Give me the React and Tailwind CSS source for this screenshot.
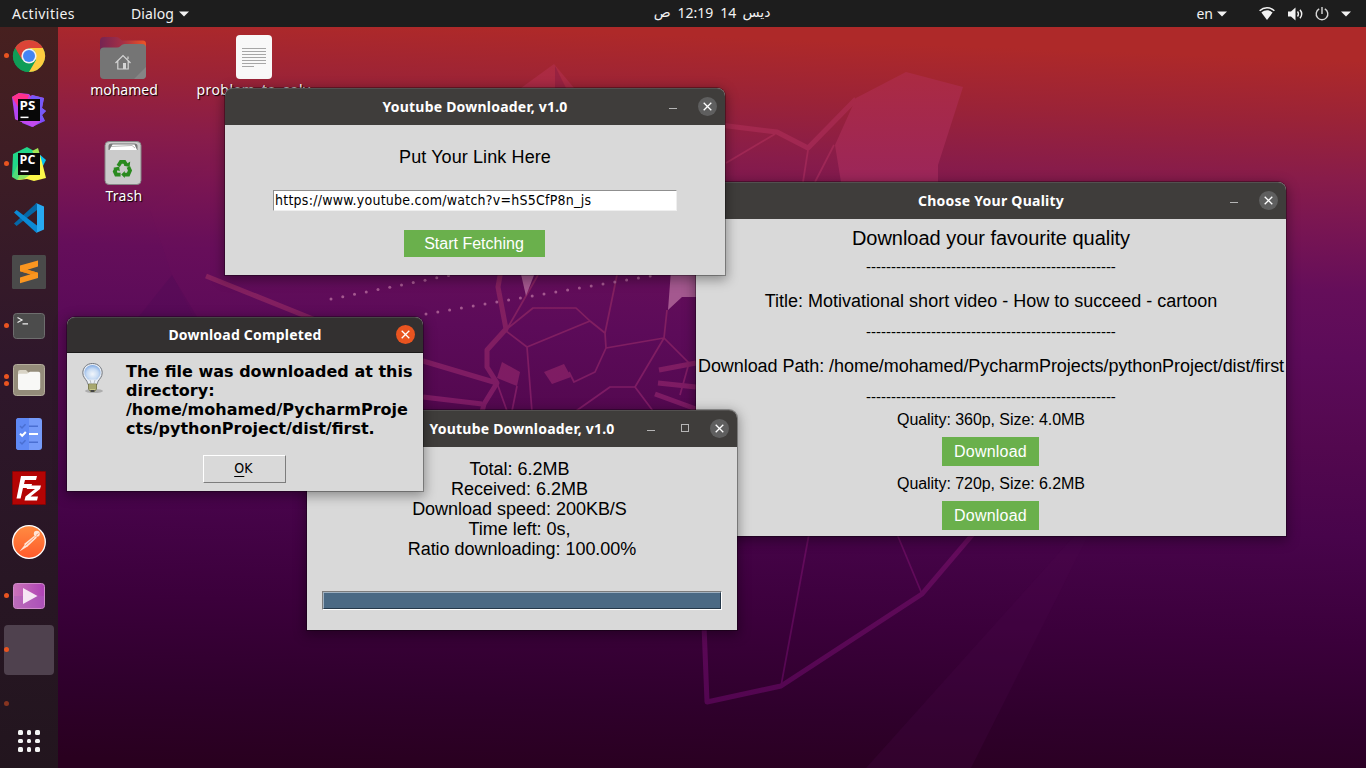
import React from "react";

const noto = "font-['Noto_Sans','Open_Sans',sans-serif]";
const arial = "font-['Liberation_Sans',Arial,sans-serif]";
const dashes = "-".repeat(50);

/* ---------- wallpaper ---------- */

function Wallpaper() {
  const row1 = Array.from({ length: 11 }, (_, i) => [331 + i * 11.75, 299 - i * 2.35]);
  const row2 = Array.from({ length: 20 }, (_, i) => [426 + i * 11.8, 314 - i * 2]);
  return (
    <svg className="absolute inset-0 h-full w-full" viewBox="0 0 1366 768" aria-hidden="true">
      <defs>
        <linearGradient id="sky" gradientUnits="userSpaceOnUse" x1="700" y1="36" x2="672" y2="780">
          <stop offset="0" stopColor="#ae2929" />
          <stop offset="0.08" stopColor="#9b2337" />
          <stop offset="0.16" stopColor="#881c4a" />
          <stop offset="0.22" stopColor="#7a1652" />
          <stop offset="0.31" stopColor="#650e5a" />
          <stop offset="0.4" stopColor="#5c0b59" />
          <stop offset="0.52" stopColor="#53084f" />
          <stop offset="0.64" stopColor="#48044b" />
          <stop offset="0.78" stopColor="#3b003b" />
          <stop offset="0.9" stopColor="#2f002c" />
          <stop offset="1" stopColor="#29001f" />
        </linearGradient>
        <linearGradient id="line" gradientUnits="userSpaceOnUse" x1="0" y1="60" x2="0" y2="710">
          <stop offset="0" stopColor="#ad2b3f" />
          <stop offset="0.18" stopColor="#9c2659" />
          <stop offset="0.35" stopColor="#83205f" />
          <stop offset="0.55" stopColor="#7c1a65" />
          <stop offset="0.75" stopColor="#640b5c" />
          <stop offset="1" stopColor="#520550" />
        </linearGradient>
      </defs>
      <rect width="1366" height="768" fill="url(#sky)" />
      <path d="M172 275 L205 330 H128Z" fill="#400850" opacity=".2" />
      <path d="M150 210 L230 150 V318 H194 L172 275Z" fill="#9a2060" opacity=".04" />
      <path d="M1074 536 H1088 L971 768 H866Z" fill="#4c0a4c" opacity=".22" />
      <g fill="url(#line)">
        <path d="M554 64 L574 88 H521Z" />
        <path d="M856 98 L906 72 L963 87 L938 165 V182 H841 L835 145 L853 105Z" />
        <path d="M502 362 L520 372 L517 386 L497 378Z" />
        <path d="M544 372 L564 364 L571 377 L552 384Z" />
      </g>
      <path d="M555 66 V88 H566Z" fill="#902040" opacity=".7" />
      <g fill="none" stroke="url(#line)" strokeLinejoin="round">
        <g strokeWidth="5">
          <path d="M720 125 L777 132 L808 148 L856 99" />
          <path d="M206 276 L313 319 L423 361 L497 383" />
          <path d="M423 397 L482 404" />
          <path d="M501 270 L498 287 L506 329 L487 350 V367 L497 383 L484 404 L482 412" />
          <path d="M659 370 L696 363 M658 383 L696 387 M655 394 L696 409" />
          <path d="M704 625 L707 702 L781 686 L922 594 L973 534" />
        </g>
        <g strokeWidth="1.7">
          <path d="M775 134 L726 163 M808 150 L803 182 M834 145 L815 182" />
          <path d="M538 275 L507 329 L533 308 H576 L590 321 L605 333 L606 348 L595 372 L574 382 L569 372" />
          <path d="M590 321 L527 347 L506 331 M527 347 L532 412 M617 275 L605 333" />
          <path d="M606 348 L664 338 L667 310 M664 338 L689 363 L680 395 M664 338 L635 387 H610 L576 411 M635 387 L653 411" />
          <path d="M497 383 L507 411 M517 386 L512 411" />
          <path d="M809 534 L781 686 M897 534 L922 594" />
        </g>
      </g>
      <g fill="#a4588f">
        <path d="M520 270 H536 L526 296Z" />
        <path d="M671 270 H698 V297 H682 L668 310Z" />
        {row1.concat(row2).map(([x, y]) => (
          <circle key={x + "-" + y} cx={x} cy={y} r="1.5" />
        ))}
      </g>
    </svg>
  );
}

/* ---------- top bar ---------- */

function Caret() {
  return (
    <svg width="10" height="6" viewBox="0 0 10 6" aria-hidden="true">
      <path d="M0 .5 H10 L5 5.5Z" fill="#f2f2f2" />
    </svg>
  );
}

function TopBar() {
  return (
    <header className={`relative grid h-[27px] grid-cols-[1fr_auto_1fr] items-center bg-[#1d1d1d] text-[14px] leading-[27px] text-[#f2f2f2] ${noto}`}>
      <div className="flex items-center pl-3">
        <span className="w-[119px] tracking-[0.47px]">Activities</span>
        <span className="mr-[5px] tracking-[0.1px]">Dialog</span>
        <Caret />
      </div>
      <div dir="rtl" className="ml-[58px] flex items-center pb-[2px] leading-[25px]">
        <span className="font-['DejaVu_Sans',sans-serif]">ديس</span>
        <span className="mr-[6px]">14</span>
        <span className="mr-[7px]">12:19</span>
        <span className="mr-[7px] font-['DejaVu_Sans',sans-serif]">ص</span>
      </div>
      <div className="flex items-center justify-end pr-[15px]">
        <span className="mr-[4px]">en</span>
        <Caret />
        <svg className="ml-[32px]" width="16" height="14" viewBox="0 0 16 14" aria-hidden="true">
          <path d="M.6 3.8 C5 -.2 11 -.2 15.4 3.8" fill="none" stroke="#f2f2f2" strokeWidth="1.5" />
          <path d="M2.4 5.6 C6 2.6 10 2.6 13.6 5.6 L8 13Z" fill="#f2f2f2" />
        </svg>
        <svg className="ml-[13px]" width="16" height="14" viewBox="0 0 16 14" aria-hidden="true">
          <path d="M0 4.5 H3 L7.5 .5 V13.5 L3 9.5 H0Z" fill="#f2f2f2" />
          <path d="M9.5 4.5 Q11.3 7 9.5 9.5 M12 2.8 Q15.4 7 12 11.2" fill="none" stroke="#f2f2f2" strokeWidth="1.4" />
        </svg>
        <svg className="ml-[11px]" width="14" height="14" viewBox="0 0 14 14" aria-hidden="true">
          <path d="M4.2 1.9 A5.8 5.8 0 1 0 9.8 1.9 M7 0 V7" fill="none" stroke="#d8d8d8" strokeWidth="1.4" />
        </svg>
        <span className="ml-[12px] flex">
          <Caret />
        </span>
      </div>
    </header>
  );
}

/* ---------- dock icons ---------- */

function ChromeIcon() {
  return (
    <svg width="34" height="34" viewBox="0 0 34 34">
      <circle cx="17" cy="17" r="16" fill="#109d57" />
      <path d="M3.1 9 A16 16 0 0 1 30.9 9 H17 L10 21Z" fill="#db4437" />
      <path d="M3.1 9 A16 16 0 0 0 17 33 L24 21 L17 24 L10 21Z" fill="#109d57" />
      <path d="M30.9 9 A16 16 0 0 1 17 33 L24 21 L23 12 L17 9Z" fill="#fecc40" />
      <circle cx="17" cy="17" r="7.6" fill="#f1f1f1" />
      <circle cx="17" cy="17" r="6" fill="#4285f4" />
    </svg>
  );
}

function JetBrainsBadge({ label }) {
  return (
    <>
      <rect x="6" y="6" width="22" height="22" fill="#080808" />
      <text x="7.6" y="17" fill="#fff" fontSize="12.5" fontWeight="700" textLength="15.8" lengthAdjust="spacingAndGlyphs" fontFamily="'Open Sans', sans-serif">
        {label}
      </text>
      <rect x="8.5" y="23.6" width="8" height="1.5" fill="#fff" />
    </>
  );
}

function PhpStormIcon() {
  return (
    <svg width="34" height="34" viewBox="0 0 34 34">
      <defs>
        <linearGradient id="ps1" x1="0" y1="0" x2=".6" y2="1">
          <stop offset="0" stopColor="#ff318c" />
          <stop offset=".35" stopColor="#e02fd0" />
          <stop offset=".7" stopColor="#9b45fb" />
          <stop offset="1" stopColor="#7a4bfb" />
        </linearGradient>
      </defs>
      <path d="M0 4 L7 0 L17 1 L22 7 L12 30 L3 26Z" fill="#b345f1" />
      <path d="M0 4 L7 0 L17 2 L15 9 L6 14Z" fill="#ff318c" />
      <path d="M17 5 L20 2 L32 5 L30 15 L34 18 L30 22 L33 28 L20 34 L10 30Z" fill="url(#ps1)" />
      <path d="M20 2 L32 5 L30 15 L34 18 L30 22 L33 28 L26 24 L18 5Z" fill="#765af8" />
      <path d="M3 26 L12 24 L29 28 L21 34Z" fill="#c44aee" />
      <JetBrainsBadge label="PS" />
    </svg>
  );
}

function PyCharmIcon() {
  return (
    <svg width="34" height="34" viewBox="0 0 34 34">
      <path d="M1 7 L15 0 L22 4 L28 10 L6 28 L0 30Z" fill="#21d789" />
      <path d="M20 4 L26 1 L28 8 L24 10Z" fill="#a6e553" />
      <path d="M26 6 L34 13 L31 19 L25 17Z" fill="#07c3f2" />
      <path d="M0 30 L6 17 L14 26 L5 33Z" fill="#51dc78" />
      <path d="M28 8 L31 19 L34 31 L22 34 L15 32 L6 33 L10 24Z" fill="#fcf84a" />
      <path d="M5 33 L9 26 L18 28 L12 32Z" fill="#8ee360" />
      <JetBrainsBadge label="PC" />
    </svg>
  );
}

function CodeIcon() {
  return (
    <svg width="30" height="30" viewBox="0 0 30 30">
      <path d="M0 20.6 L2.6 23 L23 7 V0 L22 .5Z" fill="#0567a6" />
      <path d="M0 9.4 L2.6 7 L23 22.6 V30 L21.5 29Z" fill="#0b8ad6" />
      <path d="M22 0 L30 3.5 V26.5 L22 30 C22.7 29.6 23 29 23 28 V2 C23 1 22.7 .4 22 0Z" fill="#27a9f2" />
    </svg>
  );
}

function SublimeIcon() {
  return (
    <svg width="34" height="34" viewBox="0 0 34 34">
      <rect width="34" height="34" rx="1.5" fill="#4a4a4a" />
      <path d="M8 10.5 L26 5.5 V11.5 L15.5 14.7 L26 17.8 V23 L8 28.3 V22.5 L18.5 19.3 L8 16.2Z" fill="#fb9620" />
      <path d="M8 16.2 L15.5 14.7 L26 17.8 L18.5 19.3Z" fill="#f58c16" />
    </svg>
  );
}

function TerminalIcon() {
  return (
    <svg width="32" height="26" viewBox="0 0 32 26">
      <rect x=".5" y=".5" width="31" height="25" rx="3" fill="#4c4c4c" stroke="#6e6e6e" />
      <path d="M4.5 4.5 L9 7 L4.5 9.5 M9.5 10.8 H15" fill="none" stroke="#eee" strokeWidth="1.2" />
    </svg>
  );
}

function FilesIcon() {
  return (
    <svg width="32" height="32" viewBox="0 0 32 32">
      <rect x=".5" y=".5" width="31" height="31" rx="3" fill="#948c7a" stroke="#b4ad9c" />
      <path d="M5 8 Q5 6 7 6 H13 L15.5 8.5 H20 V14 H5Z" fill="#d9d4c6" />
      <path d="M5 11 Q5 9.8 6.5 9.8 H14 L17 7.8 H25.5 Q27.2 7.8 27.2 9.5 V24 Q27.2 26 25.5 26 H6.5 Q5 26 5 24Z" fill="#f8f8f6" />
    </svg>
  );
}

function TasksIcon() {
  return (
    <svg width="26" height="32" viewBox="0 0 26 32">
      <rect width="26" height="32" rx="3" fill="#769bf9" />
      <path d="M3 0 H13 V32 H3 Q0 32 0 29 V3 Q0 0 3 0Z" fill="#5f89f5" />
      <g fill="none" strokeWidth="1.5">
        <path d="M4 8 L6 10 L9.5 6.2 M13 8.3 H22" stroke="#4a6fd2" />
        <path d="M4 24 L6 26 L9.5 22.2 M13 24.3 H22" stroke="#4a6fd2" />
        <path d="M4 15.6 L6.2 17.8 L9.8 14 M13 16 H22" stroke="#fff" strokeWidth="2" />
      </g>
    </svg>
  );
}

function FileZillaIcon() {
  return (
    <svg width="34" height="34" viewBox="0 0 34 34">
      <rect x=".5" y=".5" width="33" height="33" fill="#b30404" stroke="#8c0000" strokeDasharray="2 1" />
      <path d="M9 5 H25 L24 9 H13 L12 13 H20 L19 17 H11 L8.6 27.5 H4.5Z" fill="#fff" />
      <path d="M15.5 14.5 H29 L28 18 L18.5 25.5 H26 L25 29.5 H12.5 L13.5 25.5 L23 18 H14.7Z" fill="#fff" />
    </svg>
  );
}

function PostmanIcon() {
  return (
    <svg width="34" height="34" viewBox="0 0 34 34">
      <defs>
        <linearGradient id="pm" x1="0" y1="0" x2="0" y2="1">
          <stop offset="0" stopColor="#ff8c42" />
          <stop offset="1" stopColor="#ff5a2b" />
        </linearGradient>
      </defs>
      <circle cx="17" cy="17" r="16.3" fill="url(#pm)" stroke="#fff" strokeWidth="1.3" />
      <circle cx="24.8" cy="8.8" r="3" fill="#ffe6d8" />
      <path d="M22 11 L12 19 L15 22 L25 12.5Z" fill="#ffe6d8" />
      <path d="M13 19.5 L7.5 26.5 L15.5 21.5Z" fill="#ffe6d8" />
      <path d="M22.5 12.5 L13.5 20.5 M24 10.5 L26.5 8.5" stroke="#ff7434" strokeWidth=".7" />
    </svg>
  );
}

function VideosIcon() {
  return (
    <svg width="32" height="26" viewBox="0 0 32 26">
      <defs>
        <linearGradient id="vd" x1="0" y1="0" x2="1" y2="0">
          <stop offset="0" stopColor="#cb74ba" />
          <stop offset="1" stopColor="#ae42b5" />
        </linearGradient>
      </defs>
      <rect x=".5" y=".5" width="31" height="25" rx="3" fill="url(#vd)" stroke="#cf8bc9" />
      <path d="M1 13 H31 V23 Q31 25 29 25 H3 Q1 25 1 23Z" fill="#a861bb" opacity=".45" />
      <path d="M10 5 L24.5 13 L10 21Z" fill="#f6e6f4" />
    </svg>
  );
}

const dock = [
  { name: "chrome", icon: ChromeIcon, dots: 1 },
  { name: "phpstorm", icon: PhpStormIcon, dots: 0 },
  { name: "pycharm", icon: PyCharmIcon, dots: 1 },
  { name: "code", icon: CodeIcon, dots: 0 },
  { name: "sublime", icon: SublimeIcon, dots: 0 },
  { name: "terminal", icon: TerminalIcon, dots: 1 },
  { name: "files", icon: FilesIcon, dots: 2 },
  { name: "tasks", icon: TasksIcon, dots: 0 },
  { name: "filezilla", icon: FileZillaIcon, dots: 0 },
  { name: "postman", icon: PostmanIcon, dots: 0 },
  { name: "videos", icon: VideosIcon, dots: 1 },
  { name: "active", icon: null, dots: 1, active: true },
  { name: "closing", icon: null, dots: 1, faded: true },
];

function Dock() {
  return (
    <nav className="relative flex w-[58px] flex-col bg-linear-to-b from-[#47201f] via-[#2f172b] via-45% to-[#22151e] pt-[2px]">
      {dock.map(({ name, icon: Icon, dots, active, faded }) => (
        <div key={name} className="flex h-[54px] shrink-0 items-center justify-center">
          <div className={`relative flex h-[50px] w-[50px] items-center justify-center rounded-[4px] ${active ? "bg-[#4f414e]" : ""}`}>
            <span className={`absolute top-0 left-0 flex h-full flex-col justify-center gap-[2px] pb-px ${faded ? "opacity-50" : ""}`}>
              {Array.from({ length: dots }, (_, i) => (
                <i key={i} className="h-[5px] w-[5px] rounded-full bg-[#e95420]" />
              ))}
            </span>
            {Icon && <Icon />}
          </div>
        </div>
      ))}
      <div className="-mt-px grid grid-cols-3 gap-[4px] self-center">
        {Array.from({ length: 9 }, (_, i) => (
          <i key={i} className="h-[4.6px] w-[4.6px] rounded-[1.5px] bg-[#f4f4f4]" />
        ))}
      </div>
    </nav>
  );
}

/* ---------- desktop icons ---------- */

function DesktopIcon({ className, label, labelClass, children }) {
  return (
    <div className={`absolute flex w-[130px] flex-col items-center ${className}`}>
      <div className="flex h-[44px] items-center">{children}</div>
      <span className={`text-[14px] leading-[20px] whitespace-nowrap text-white [text-shadow:1px_1px_1px_#000] ${noto} ${labelClass}`}>{label}</span>
    </div>
  );
}

function HomeFolder() {
  return (
    <svg width="46" height="42" viewBox="0 0 46 42">
      <defs>
        <linearGradient id="tab" x1="0" y1="0" x2="1" y2="0">
          <stop offset="0" stopColor="#762452" />
          <stop offset=".5" stopColor="#a52f45" />
          <stop offset="1" stopColor="#ee5525" />
        </linearGradient>
      </defs>
      <path d="M0 4 Q0 0 4 0 H16 Q18 0 19 1 L22 3.5 H43 Q46 3.5 46 7 V20 H0Z" fill="url(#tab)" />
      <path d="M0 14 Q0 10.5 4 10.5 H17 Q19 10.5 20 9.5 L22 7.8 Q23 7 25 7 H42 Q46 7 46 11 V38 Q46 42 42 42 H4 Q0 42 0 38Z" fill="#757575" />
      <path d="M46 30 V38 Q46 42 42 42 H34Z" fill="#858585" />
      <path d="M15.5 26 L23 18.5 L30.5 26 M17.8 24 V32 H28.2 V24 M28 19.5 V22" fill="none" stroke="#d4d4d4" strokeWidth="1.2" />
      <rect x="23" y="26" width="3" height="6" fill="#d4d4d4" />
    </svg>
  );
}

function TextFile() {
  return (
    <svg width="36" height="44" viewBox="0 0 36 44">
      <rect width="36" height="44" rx="4" fill="#f8f8f8" />
      <path d="M6 13.5 H30 M6 16.5 H30 M6 19.5 H30 M6 22.5 H30 M6 25.5 H30 M6 28.5 H30 M6 31.5 H18" stroke="#a6a6a6" strokeWidth="1" />
    </svg>
  );
}

function TrashCan() {
  return (
    <svg width="38" height="44" viewBox="0 0 38 44">
      <rect x="1" y=".5" width="36" height="43" rx="4" fill="#cbcbcb" stroke="#858585" />
      <path d="M4.5 9 V5 Q4.5 2.5 7.5 2.5 H30.5 Q33.5 2.5 33.5 5 V9Z" fill="#777" />
      <path d="M5.5 9 L8.5 3.5 L30.5 3.5 L33 9Z" fill="#fff" />
      <path d="M7 5.5 L28 4.5 L31 7" fill="none" stroke="#999" strokeWidth=".7" />
      <g fill="none" stroke="#2a8a1f" strokeWidth="3.8">
        <path d="M14.2 25 L16.8 20.8 H20.4 L22.4 24" />
        <path d="M24.4 26 L26 29.5 L24.2 33.6 H20" />
        <path d="M16.6 33.6 H12.2 L10.8 30.6 L12.4 27.2" />
      </g>
      <path d="M19.8 24.8 L25.6 26 L26.2 20.6Z M20.8 30 V37 L17.2 33.6Z M9 27 L15.2 25.6 L15.8 30.2Z" fill="#2a8a1f" />
    </svg>
  );
}

/* ---------- windows ---------- */

function CloseButton({ alert }) {
  return (
    <button className={`flex h-[19px] w-[19px] items-center justify-center rounded-full ${alert ? "bg-[#e95420]" : "bg-[#5f5f5f]"}`} aria-label="Close">
      <svg width="9" height="9" viewBox="0 0 9 9">
        <path d="M.7 .7 L8.3 8.3 M8.3 .7 L.7 8.3" stroke="#fff" strokeWidth="1.3" />
      </svg>
    </button>
  );
}

function Window({ className, title, tracking, minimize, maximize, dialog, children }) {
  return (
    <section className={`absolute flex flex-col rounded-t-[8px] bg-[#d9d9d9] shadow-[0_0_0_1px_rgba(0,0,0,0.3),0_3px_12px_2px_rgba(0,0,0,0.35)] ${className}`}>
      <div
        className={`relative flex shrink-0 items-center justify-end rounded-t-[8px] pr-[8px] ${
          dialog ? "h-[36px] border-b border-[#1b1a1a] bg-[#333030]" : "h-[37px] bg-[#3f3d3b]"
        } shadow-[inset_0_1px_0_rgba(255,255,255,0.1)]`}
      >
        <h2 className={`absolute inset-0 flex items-center justify-center pb-px text-[14px] font-bold text-white ${noto} ${tracking}`}>{title}</h2>
        <div className="relative flex items-center pb-px">
          {minimize && <i className={`mt-[4px] h-px w-[8px] bg-[#b5b5b5] ${maximize ? "mr-[26px]" : "mr-[21px]"}`} />}
          {maximize && <i className="mr-[21px] h-[8px] w-[8px] border border-[#b5b5b5]" />}
          <CloseButton alert={dialog} />
        </div>
      </div>
      {children}
    </section>
  );
}

function QualityWindow() {
  const item = `flex shrink-0 items-center justify-center whitespace-nowrap ${arial}`;
  return (
    <Window className="top-[182px] left-[696px] h-[354px] w-[590px]" title="Choose Your Quality" tracking="tracking-[0.25px]" minimize>
      <div className="flex flex-col items-center text-black">
        <div className={`h-[39px] pb-px text-[20px] tracking-[-0.03px] ${item}`}>Download your favourite quality</div>
        <div className={`h-[19px] text-[15px] ${item}`}>{dashes}</div>
        <div className={`h-[48px] text-[18px] ${item}`}>Title: Motivational short video - How to succeed - cartoon</div>
        <div className={`h-[15px] text-[15px] ${item}`}>{dashes}</div>
        <div className={`h-[52px] text-[18px] tracking-[-0.06px] ${item}`}>Download Path: /home/mohamed/PycharmProjects/pythonProject/dist/first</div>
        <div className={`h-[11px] text-[15px] ${item}`}>{dashes}</div>
        {["Quality: 360p, Size: 4.0MB", "Quality: 720p, Size: 6.2MB"].map((q, i) => (
          <React.Fragment key={q}>
            <div className={`text-[16px] tracking-[-0.06px] ${i ? "h-[35px]" : "h-[34px]"} ${item}`}>{q}</div>
            <button className={`mr-px h-[29px] w-[97px] bg-[#6ab04c] text-[16px] tracking-[0.2px] text-white ${item}`}>Download</button>
          </React.Fragment>
        ))}
      </div>
    </Window>
  );
}

function LinkWindow() {
  return (
    <Window className="top-[88px] left-[225px] h-[187px] w-[500px]" title="Youtube Downloader, v1.0" tracking="tracking-[0.22px]" minimize>
      <div className={`flex flex-col items-center text-black ${arial}`}>
        <label className="flex h-[65px] items-center text-[18px] tracking-[0.1px]">Put Your Link Here</label>
        <div className="flex h-[21px] w-[404px] items-center border border-t-[#8f8f8f] border-r-[#efefef] border-b-[#efefef] border-l-[#8f8f8f] bg-white pb-px pl-px font-['DejaVu_Sans_Condensed','DejaVu_Sans',sans-serif] text-[14px] tracking-[0.25px]">
          https://www.youtube.com/watch?v=hS5CfP8n_js
        </div>
        <button className="mt-[19px] mr-[2px] h-[27px] w-[141px] bg-[#6ab04c] text-[16px] text-white">Start Fetching</button>
      </div>
    </Window>
  );
}

const stats = ["Total: 6.2MB", "Received: 6.2MB", "Download speed: 200KB/S", "Time left: 0s,"];

function ProgressWindow() {
  return (
    <Window className="top-[410px] left-[307px] h-[220px] w-[430px]" title="Youtube Downloader, v1.0" tracking="tracking-[0.22px]" minimize maximize>
      <div className={`flex flex-col items-center pt-[12px] text-[18px] leading-[20px] tracking-[-0.02px] text-black ${arial}`}>
        {stats.map((s) => (
          <p key={s} className="pr-[5px]">
            {s}
          </p>
        ))}
        <p>Ratio downloading: 100.00%</p>
        <div className="mt-[32px] h-[19px] w-[400px] border border-t-[#7c7c7c] border-r-white border-b-white border-l-[#7c7c7c]">
          <div className="h-full w-full border border-t-[#9fb0c0] border-r-[#24384a] border-b-[#24384a] border-l-[#9fb0c0] bg-[#4a6984]" />
        </div>
      </div>
    </Window>
  );
}

function Bulb() {
  return (
    <svg width="24" height="32" viewBox="0 0 24 32" aria-hidden="true">
      <defs>
        <radialGradient id="glass" cx=".5" cy=".62" r=".6">
          <stop offset="0" stopColor="#f2f6fb" />
          <stop offset=".6" stopColor="#c6daf3" />
          <stop offset="1" stopColor="#86aee4" />
        </radialGradient>
      </defs>
      <ellipse cx="13" cy="29" rx="9" ry="2" fill="#000" opacity=".2" />
      <path d="M11.5 1.5 C5.5 1.5 1.8 6 1.8 10.8 C1.8 15 4.5 16.8 6 19.5 C6.6 21 6.8 22 7 22.5 H16 C16.2 22 16.4 21 17 19.5 C18.5 16.8 21.2 15 21.2 10.8 C21.2 6 17.5 1.5 11.5 1.5Z" fill="#e9eef5" stroke="#70757d" strokeWidth="1" />
      <path d="M11.5 3 C6.5 3 3.4 6.8 3.4 10.8 C3.4 14 5.5 15.6 7 17.6 H16 C17.5 15.6 19.6 14 19.6 10.8 C19.6 6.8 16.5 3 11.5 3Z" fill="url(#glass)" />
      <path d="M9 18 L10 21.5 M14 18 L13 21.5" stroke="#aab0b8" strokeWidth=".8" />
      <path d="M7.5 22 H15.5 V27 L13.5 29.5 H9.5 L7.5 27Z" fill="#c9c98a" stroke="#6b6b3c" strokeWidth=".8" />
      <path d="M7.5 24 H15.5 M7.5 26 H15.5" stroke="#77774a" strokeWidth=".8" />
      <path d="M9 28 H14 L12.8 30 H10.2Z" fill="#444" />
    </svg>
  );
}

function CompletedDialog() {
  return (
    <Window className="top-[317px] left-[67px] h-[174px] w-[356px]" title="Download Completed" tracking="tracking-[0.2px]" dialog>
      <div className="flex h-[102px] items-start pt-[9px] pl-[14px]">
        <Bulb />
        <p className="ml-[21px] font-['DejaVu_Sans',sans-serif] text-[16px] leading-[19px] font-bold whitespace-nowrap text-black">
          <span className="block">The file was downloaded at this</span>
          <span className="block">directory:</span>
          <span className="block">/home/mohamed/PycharmProje</span>
          <span className="block">cts/pythonProject/dist/first.</span>
        </p>
      </div>
      <button className="ml-[136px] h-[28px] w-[83px] border border-t-white border-r-[#7d7d7d] border-b-[#7d7d7d] border-l-white pr-[2px] pb-[2px] font-['DejaVu_Sans_Condensed','DejaVu_Sans',sans-serif] text-[14px] leading-[24px] tracking-[0.2px] text-black">
        <span className="underline underline-offset-[3px]">O</span>K
      </button>
    </Window>
  );
}

export default function App() {
  return (
    <div className="relative flex h-[768px] w-[1366px] flex-col overflow-hidden bg-[#29001f]">
      <Wallpaper />
      <TopBar />
      <div className="flex min-h-0 flex-1">
        <Dock />
      </div>
      <DesktopIcon className="top-[36px] left-[58px]" label="mohamed" labelClass="pl-[2px]">
        <HomeFolder />
      </DesktopIcon>
      <DesktopIcon className="top-[35px] left-[189px]" label="problem_to_solv" labelClass="pt-px pr-px tracking-[0.42px]">
        <TextFile />
      </DesktopIcon>
      <DesktopIcon className="top-[141px] left-[58px]" label="Trash" labelClass="pt-px pl-[2px] tracking-[0.24px]">
        <TrashCan />
      </DesktopIcon>
      <QualityWindow />
      <LinkWindow />
      <ProgressWindow />
      <CompletedDialog />
    </div>
  );
}
